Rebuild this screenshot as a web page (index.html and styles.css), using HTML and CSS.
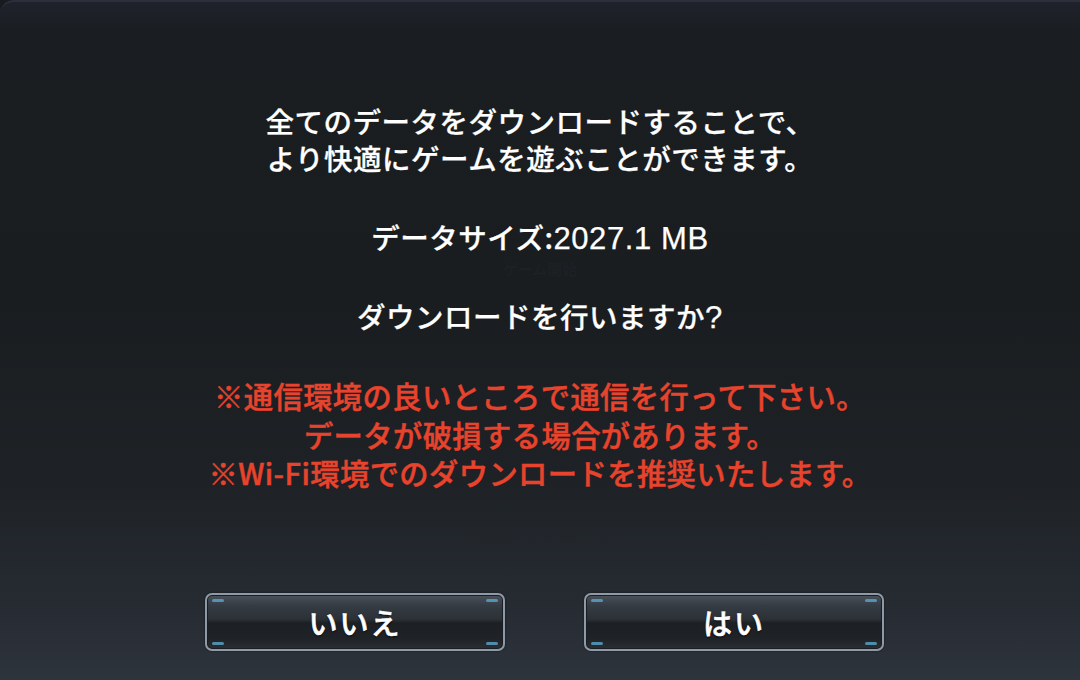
FILE: index.html
```html
<!DOCTYPE html>
<html lang="ja">
<head>
<meta charset="utf-8">
<link rel="stylesheet" href="styles.css">
</head>
<body>
<div class="screen">
  <div class="ghost ghost-top">ゲーム開始</div>
  <div class="ghost ghost-bottom">一括ダウンロード</div>
  <div class="content">
    <p class="msg">全てのデータをダウンロードすることで、<br>より快適にゲームを遊ぶことができます。</p>
    <p class="msg size">データサイズ:<span class="num">2027.1 MB</span></p>
    <p class="msg ask">ダウンロードを行いますか<span class="num">?</span></p>
    <p class="warn">※通信環境の良いところで通信を行って下さい。<br>データが破損する場合があります。<br>※Wi-Fi環境でのダウンロードを推奨いたします。</p>
  </div>
  <div class="buttons">
    <button class="btn"><span class="c tl"></span><span class="c tr"></span><span class="c bl"></span><span class="c br"></span><span class="label">いいえ</span></button>
    <button class="btn"><span class="c tl"></span><span class="c tr"></span><span class="c bl"></span><span class="c br"></span><span class="label">はい</span></button>
  </div>
</div>
</body>
</html>
```
FILE: styles.css
```css
* { box-sizing: border-box; }
html, body {
  margin: 0;
  padding: 0;
  width: 1080px;
  height: 680px;
  overflow: hidden;
  background: #181b1f;
}
.screen {
  position: relative;
  width: 1080px;
  height: 680px;
  display: flex;
  flex-direction: column;
  align-items: center;
  border-top-left-radius: 14px;
  border-top: 2px solid #2c303a;
  background: linear-gradient(180deg, #1f222b 0px, #1a1d21 30px, #1a1d20 300px, #1e2226 480px, #262b32 600px, #2e343c 680px);
  font-family: "Noto Sans CJK JP", sans-serif;
  color: #ffffff;
}
.content {
  display: flex;
  flex-direction: column;
  align-items: center;
  padding-top: 100px;
  gap: 42px;
  text-align: center;
  position: relative;
  z-index: 1;
}
.msg {
  margin: 0;
  font-size: 28.5px;
  line-height: 37px;
  height: auto;
  font-weight: 500;
  letter-spacing: 0.5px;
  -webkit-text-stroke: 0.25px #ffffff;
}
.size, .ask { height: 37px; overflow: visible; }
.num {
  font-family: "Liberation Sans", sans-serif;
  font-size: 31px;
  line-height: 10px;
  letter-spacing: 0.6px;
}
.warn {
  margin: 0;
  font-size: 29.3px;
  line-height: 38.5px;
  font-weight: 500;
  color: #e8432c;
  letter-spacing: 0.4px;
  -webkit-text-stroke: 0.45px #e8432c;
}
.ghost {
  position: absolute;
  left: 0;
  right: 0;
  text-align: center;
  font-size: 15px;
  line-height: 16px;
  font-weight: 700;
}
.ghost-top { top: 259px; color: #1d2024; }
.ghost-bottom { top: 521px; font-size: 19px; line-height: 20px; color: #22262b; }
.buttons {
  display: flex;
  gap: 79px;
  margin-top: auto;
  margin-bottom: 29px;
  margin-left: 9px;
}
.btn {
  position: relative;
  width: 300px;
  height: 58px;
  border: 2px solid #8e9aa6;
  border-radius: 7px;
  background: linear-gradient(180deg, #4a525c 0%, #353b43 20%, #2c3137 45%, #1c1f23 52%, #1f2226 80%, #2a2f35 100%);
  box-shadow: inset 0 0 0 1px #1a1d21, 0 0 2px rgba(0,0,0,0.6);
  display: flex;
  align-items: center;
  justify-content: center;
  padding: 0;
  font-family: "Noto Sans CJK JP", sans-serif;
}
.label {
  color: #ffffff;
  font-size: 29px;
  font-weight: 500;
  letter-spacing: 2px;
  -webkit-text-stroke: 0.6px #ffffff;
  text-shadow: 0 1px 2px #000;
}
.c {
  position: absolute;
  width: 12px;
  height: 3px;
  background: #5aa6cc;
  border-radius: 2px;
  opacity: 0.8;
}
.tl { top: 4px; left: 5px; }
.tr { top: 4px; right: 5px; }
.bl { bottom: 4px; left: 5px; }
.br { bottom: 4px; right: 5px; }
```
